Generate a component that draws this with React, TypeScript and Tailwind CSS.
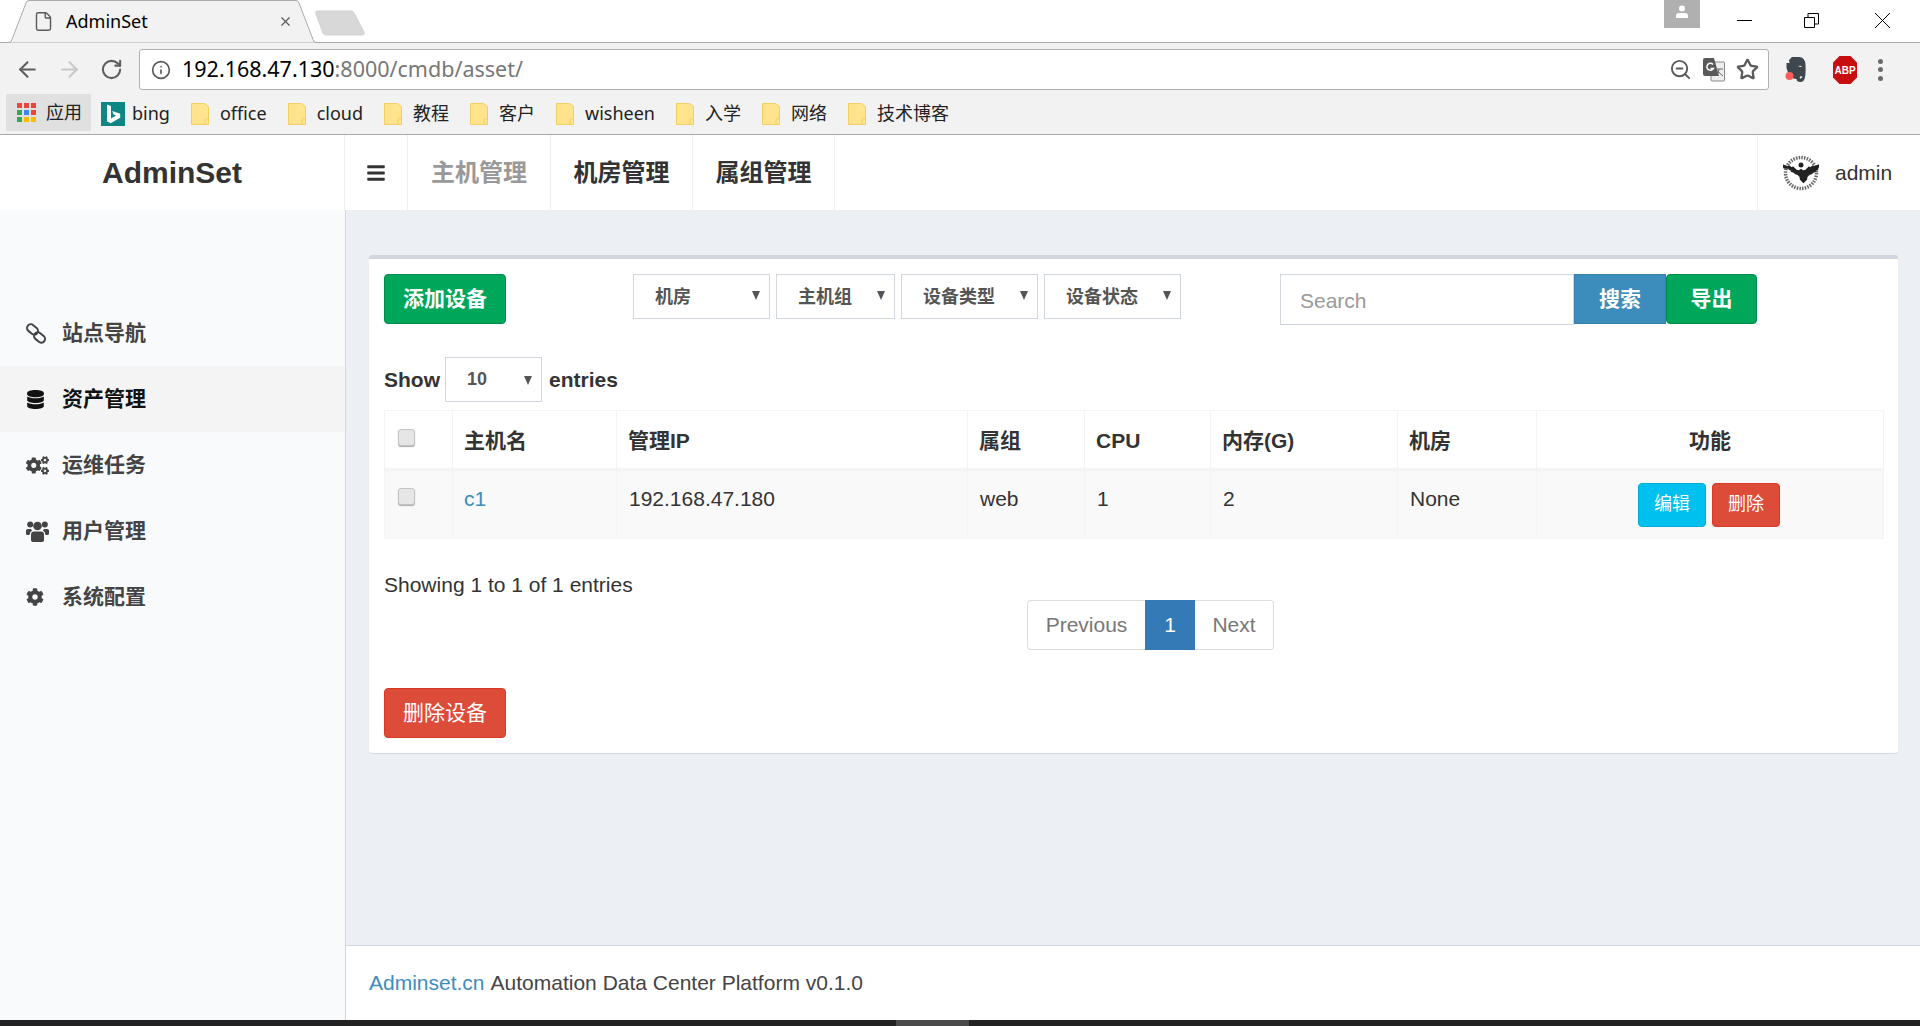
import { ArrowLeft, ArrowRight, File, Info, RotateCw, Star, X, ZoomOut } from "lucide-react";
import { FaBars, FaCog, FaCogs, FaDatabase } from "react-icons/fa";

const sans = "font-['Liberation_Sans','Noto_Sans_CJK_SC',sans-serif]";
const chromeFont = "font-['Noto_Sans','Noto_Sans_CJK_SC',sans-serif]";

const bookmarks = ["office", "cloud", "教程", "客户", "wisheen", "入学", "网络", "技术博客"];

const ChainIcon = () => (
  <svg width="20" height="21" viewBox="0 0 20 21" fill="none" stroke="currentColor" strokeWidth="2">
    <rect x="0.500" y="2.700" width="12" height="7.500" rx="3.750" transform="rotate(40 6.500 6.500)" />
    <rect x="7.500" y="10.700" width="12" height="7.500" rx="3.750" transform="rotate(40 13.500 14.500)" />
  </svg>
);

const UsersIcon = () => (
  <svg width="23" height="21" viewBox="0 0 23 21" fill="currentColor">
    <circle cx="4.200" cy="3.500" r="3" />
    <circle cx="18.800" cy="3.500" r="3" />
    <circle cx="11.500" cy="5" r="4.300" />
    <path d="M0 9.500Q0 8 2 8h3l1 1.500Q3.500 11 3.500 14H1.500Q0 14 0 12.500z" />
    <path d="M23 9.500Q23 8 21 8h-3l-1 1.500q2.500 1.500 2.500 4.500h2Q23 14 23 12.500z" />
    <path d="M5 13.500Q5 10.500 8 10.500h7q3 0 3 3V19q0 2-3 2H8q-3 0-3-2z" />
  </svg>
);

const sideItems = [
  { label: "站点导航", icon: <ChainIcon /> },
  { label: "资产管理", icon: <FaDatabase size={19} />, active: true },
  { label: "运维任务", icon: <FaCogs size={23} /> },
  { label: "用户管理", icon: <UsersIcon /> },
  { label: "系统配置", icon: <FaCog size={18} /> },
];

const filters = [
  { label: "机房", width: "w-[137px]" },
  { label: "主机组", width: "w-[119px]" },
  { label: "设备类型", width: "w-[137px]" },
  { label: "设备状态", width: "w-[137px]" },
];

const columns = ["主机名", "管理IP", "属组", "CPU", "内存(G)", "机房"];
const row = ["192.168.47.180", "web", "1", "2", "None"];

const Folder = () => (
  <svg width="18" height="22" viewBox="0 0 18 22" className="shrink-0">
    <path d="M.5.5h13l4 3v18H.5z" fill="#ffe38d" stroke="#f2cf63" />
    <path d="M14 21.5v-5q1.700-2 3.500 0v5z" fill="#ffe38d" stroke="#f2cf63" />
  </svg>
);

const Triangle = ({ className }: { className: string }) => (
  <span
    className={`pointer-events-none absolute h-0 w-0 border-x-[4px] border-t-[9px] border-x-transparent border-t-[#555] ${className}`}
  />
);

const Checkbox = () => (
  <input
    type="checkbox"
    className="block h-[17px] w-[17px] appearance-none rounded-[3px] border border-[#c4c4c4] bg-[#e6e6e6] shadow-[0_1px_1px_#aaa]"
  />
);

const ChromeBar = () => (
  <div className={`${chromeFont} shrink-0`}>
    <div className="flex h-[43px] border-b border-[#aaaaaa] bg-white">
      <div className="relative ml-[7px] flex h-[43px] w-[313px] items-center pl-[26px] pr-[27px]">
        <svg className="absolute left-0 top-0" width="313" height="43" viewBox="0 0 313 43">
          <path d="M0 42.500h2q2 0 3-3L19 3q1-2.500 3-2.500h267q2 0 3 2.500l14 36.500q1 3 3 3h4" fill="#f2f2f2" stroke="#aaaaaa" />
        </svg>
        <File size={21} strokeWidth={1.6} className="relative text-[#5a5a5a]" />
        <span className="relative ml-[12px] text-[18px] text-black">AdminSet</span>
        <X size={15} strokeWidth={1.8} className="relative ml-auto text-[#555]" />
      </div>
      <svg className="-ml-[5px] mt-[10px]" width="52" height="26" viewBox="0 0 52 26">
        <path d="M2 1h34q2 0 3 2l10 19q1 3-2 3H11q-2 0-3-2L1 4q-1-3 1-3z" fill="#d8d8d8" stroke="#d0d0d0" />
      </svg>
      <div className="ml-auto flex">
        <div className="flex h-[28px] w-[36px] items-start justify-center bg-[#b0b0b0] pt-[5px]">
          <svg width="14" height="13" viewBox="0 0 14 13" fill="#fff">
            <circle cx="7" cy="3.500" r="3" />
            <path d="M1 13V10.500Q1 8.500 4 8h6q3 .5 3 2.500V13z" />
          </svg>
        </div>
        <div className="flex w-[220px] items-start">
          <div className="ml-[37px] mt-[20px] h-px w-[15px] bg-black" />
          <svg className="ml-[52px] mt-[13px]" width="15" height="15" viewBox="0 0 15 15" fill="none" stroke="#000">
            <path d="M.5 4.500h10v10H.5zM4 4.500V.5h10.500V11h-4" />
          </svg>
          <svg className="ml-[56px] mt-[13px]" width="15" height="15" viewBox="0 0 15 15" fill="none" stroke="#000">
            <path d="M0 0l15 15M15 0L0 15" />
          </svg>
        </div>
      </div>
    </div>
    <div className="h-[92px] border-b border-[#aaaaaa] bg-[#f2f2f2]">
      <div className="flex h-[53px] items-center">
        <ArrowLeft size={25} strokeWidth={2} className="ml-[15px] text-[#5f5f5f]" />
        <ArrowRight size={25} strokeWidth={2} className="ml-[17px] text-[#c8c8c8]" />
        <RotateCw size={23} strokeWidth={2.2} className="ml-[18px] text-[#5f5f5f]" />
        <div className="ml-[16px] flex h-[41px] w-[1630px] items-center rounded-[3px] border border-[#b0b0b0] bg-white">
          <Info size={20} strokeWidth={2} className="ml-[11px] text-[#5a5a5a]" />
          <span className="ml-[11px] text-[21.500px]">
            <span className="text-black">192.168.47.130</span>
            <span className="text-[#777]">:8000/cmdb/asset/</span>
          </span>
          <div className="ml-auto flex items-center gap-[11px] pr-[9px]">
            <ZoomOut size={23} strokeWidth={2} className="text-[#5a5a5a]" />
            <svg width="22" height="24" viewBox="0 0 22 24">
              <rect x="8" y="4" width="13.500" height="19" rx="1" fill="#eee" stroke="#888" />
              <path d="M2 0h9l5 18H2q-2 0-2-2V2q0-2 2-2z" fill="#5a5a5a" />
              <path d="M10 6.500a3.500 3.500 0 1 0 .5 4H7.500" fill="none" stroke="#fff" strokeWidth="1.500" />
              <path d="M13 11h7M16 11q0 4-3 7M15 13q2 3 5 5" fill="none" stroke="#666" />
            </svg>
            <Star size={23} strokeWidth={2.4} className="text-[#5a5a5a]" />
          </div>
        </div>
        <svg className="ml-[16px]" width="21" height="26" viewBox="0 0 21 26">
          <path d="M4 3l3-3h7q6 0 6.500 8 .5 10-1 14-1 3-4 3-4 0-4-3-4 0-6-3-3-3-4-8V6h3z" fill="#3d474d" />
          <path d="M13 9q3-1 4 1-2 0-4-1zM15 22q-1-2 1-3 1 1 2 1-2 .5-3 2z" fill="#fff" />
          <circle cx="4.500" cy="19" r="4" fill="#ff5c60" />
        </svg>
        <svg className="ml-[26px]" width="26" height="30" viewBox="0 0 26 30">
          <path d="M7.500 1h11L25 7.500v15L18.500 29h-11L1 22.500v-15z" fill="#c70d0d" />
          <text x="13" y="19" textAnchor="middle" fontSize="10" fontWeight="700" fill="#fff" fontFamily="Liberation Sans">
            ABP
          </text>
        </svg>
        <div className="ml-[20px] flex flex-col gap-[3.500px]">
          <span className="h-[5px] w-[5px] rounded-full bg-[#6a6a6a]" />
          <span className="h-[5px] w-[5px] rounded-full bg-[#6a6a6a]" />
          <span className="h-[5px] w-[5px] rounded-full bg-[#6a6a6a]" />
        </div>
      </div>
      <div className="flex h-[38px] items-start pl-[6px] text-[18px] text-[#222]">
        <div className="-mt-[2px] flex h-[37px] w-[85px] items-center bg-[#e0e0e0] pl-[11px]">
          <svg width="20" height="20" viewBox="0 0 20 20" className="shrink-0">
            <path d="M0 0h5v5H0zM7 0h5v5H7zM14 0h5v5h-5z" fill="#e8453c" />
            <path d="M0 7h5v5H0z" fill="#34a853" />
            <path d="M7 7h5v5H7z" fill="#4285f4" />
            <path d="M14 7h5v5h-5z" fill="#e8453c" />
            <path d="M0 14h5v5H0z" fill="#34a853" />
            <path d="M7 14h5v5H7zM14 14h5v5h-5z" fill="#fbbc05" />
          </svg>
          <span className="ml-[9px]">应用</span>
        </div>
        <div className="flex h-[35px] items-center gap-[21px]">
          <div className="ml-[10px] flex items-center gap-[7px]">
            <svg width="24" height="24" viewBox="0 0 24 24">
              <rect width="24" height="24" fill="#0e8784" />
              <path d="M6 2.500l4 1.500v12.500l5-3-2.500-1.200-1.300-3.300 8 2.800v4l-9.500 5.500-3.700-2z" fill="#fff" />
            </svg>
            <span>bing</span>
          </div>
          {bookmarks.map((name) => (
            <div key={name} className="flex items-center gap-[11px]">
              <Folder />
              <span>{name}</span>
            </div>
          ))}
        </div>
      </div>
    </div>
  </div>
);

const TopNav = () => (
  <header className="flex h-[75px] shrink-0 bg-white text-[#333] shadow-[0_1px_2px_rgba(0,0,0,0.06)]">
    <div className="flex w-[345px] items-center justify-center border-r border-[#eeeeee] text-[30px] font-bold">
      AdminSet
    </div>
    <div className="flex w-[63px] items-center justify-center border-r border-[#eeeeee]">
      <FaBars size={20} />
    </div>
    <div className="flex w-[143px] items-center justify-center border-r border-[#eeeeee] text-[24px] font-bold text-[#999]">
      主机管理
    </div>
    <div className="flex w-[142px] items-center justify-center border-r border-[#eeeeee] text-[24px] font-bold">
      机房管理
    </div>
    <div className="flex w-[142px] items-center justify-center border-r border-[#eeeeee] text-[24px] font-bold">
      属组管理
    </div>
    <div className="ml-auto flex w-[163px] items-center border-l border-[#eeeeee] pl-[25px] text-[21px]">
      <svg width="36" height="38" viewBox="0 0 36 38">
        <circle cx="18" cy="19" r="15.500" fill="none" stroke="#666" strokeWidth="3.500" strokeDasharray="1.500 1.200" />
        <path
          d="M0 11l5 2 1-1 3 2 1-1 3 3 3 1 2-1.500 2 1.500 3-1 3-3 1 1 3-2 1 1 5-2-1 3-1.500.5 1 1-2.500 1 .5 1-3 1-.5 1-3 1-2 2-.5 3-3 3-3-3-.5-3-2-2-3-1-.5-1-3-1 .5-1-2.500-1 1-1L1 14z"
          fill="#222"
          stroke="#222"
          strokeWidth="1.200"
        />
        <circle cx="18" cy="11" r="2.500" fill="#222" />
      </svg>
      <span className="ml-[16px]">admin</span>
    </div>
  </header>
);

const Sidebar = () => (
  <aside className="w-[346px] shrink-0 border-r border-[#d2d6de] bg-[#f9fafc] pt-[90px]">
    {sideItems.map((item) => (
      <div
        key={item.label}
        className={`flex h-[66px] items-center text-[21px] font-bold ${item.active ? "bg-[#f4f4f5] text-[#111]" : "text-[#444]"}`}
      >
        <span className="flex w-[62px] shrink-0 pl-[26px]">{item.icon}</span>
        {item.label}
      </div>
    ))}
  </aside>
);

const Toolbar = () => (
  <div className="flex items-start">
    <button className="h-[50px] w-[122px] rounded-[4px] border border-[#008d4c] bg-[#00a65a] text-[21px] font-bold text-white">
      添加设备
    </button>
    <div className="ml-[127px] flex gap-[6px]">
      {filters.map((f) => (
        <div key={f.label} className={`relative ${f.width}`}>
          <select className="h-[45px] w-full appearance-none border border-[#d2d6de] bg-white pl-[21px] pt-[2px] text-[18px] font-bold text-[#555]">
            <option>{f.label}</option>
          </select>
          <Triangle className="right-[10px] top-[17px]" />
        </div>
      ))}
    </div>
    <input
      placeholder="Search"
      className="ml-[99px] h-[51px] w-[294px] border border-[#d2d6de] bg-white pl-[19px] pt-[2px] text-[21px] placeholder:text-[#999]"
    />
    <button className="h-[50px] w-[92px] border border-[#367fa9] bg-[#3c8dbc] text-[21px] font-bold text-white">
      搜索
    </button>
    <button className="h-[50px] w-[91px] rounded-[4px] border border-[#008d4c] bg-[#00a65a] text-[21px] font-bold text-white">
      导出
    </button>
  </div>
);

const AssetTable = () => (
  <table className="mt-[8px] w-[1499px] table-fixed border-collapse text-[21px] text-[#333]">
    <colgroup>
      <col className="w-[68px]" />
      <col className="w-[164px]" />
      <col className="w-[351px]" />
      <col className="w-[117px]" />
      <col className="w-[126px]" />
      <col className="w-[187px]" />
      <col className="w-[139px]" />
      <col className="w-[347px]" />
    </colgroup>
    <thead>
      <tr className="h-[59px]">
        <th className="border border-b-[3px] border-[#f4f4f4] pb-[5px] pl-[13px]">
          <Checkbox />
        </th>
        {columns.map((c) => (
          <th key={c} className="border border-b-[3px] border-[#f4f4f4] pl-[11px] pt-[2px] text-left font-bold">
            {c}
          </th>
        ))}
        <th className="border border-b-[3px] border-[#f4f4f4] pt-[2px] text-center font-bold">功能</th>
      </tr>
    </thead>
    <tbody>
      <tr className="h-[67px] bg-[#f9f9f9]">
        <td className="border border-[#f4f4f4] pb-[25px] pl-[13px] pt-[9px]">
          <Checkbox />
        </td>
        <td className="border border-[#f4f4f4] pb-[26px] pl-[11px] pt-[15px] leading-[26px] text-[#3c8dbc]">c1</td>
        {row.map((v) => (
          <td key={v} className="border border-[#f4f4f4] pb-[26px] pl-[12px] pt-[15px] leading-[26px]">
            {v}
          </td>
        ))}
        <td className="border border-[#f4f4f4]">
          <div className="flex justify-center gap-[6px] pr-[2px]">
            <button className="h-[44px] w-[68px] rounded-[4px] border border-[#00acd6] bg-[#00c0ef] text-[18px] text-white">
              编辑
            </button>
            <button className="h-[44px] w-[68px] rounded-[4px] border border-[#d73925] bg-[#dd4b39] text-[18px] text-white">
              删除
            </button>
          </div>
        </td>
      </tr>
    </tbody>
  </table>
);

export default function App() {
  return (
    <div className={`${sans} flex h-[1026px] w-[1920px] flex-col overflow-hidden bg-white`}>
      <ChromeBar />
      <TopNav />
      <div className="flex min-h-0 flex-1">
        <Sidebar />
        <div className="flex min-w-0 flex-1 flex-col">
          <main className="flex-1 bg-[#ecf0f5] pl-[23px] pr-[22px] pt-[45px]">
            <div className="rounded-[3px] border-t-4 border-[#d2d6de] bg-white px-[15px] pb-[15px] pt-[15px] shadow-[0_1px_1px_rgba(0,0,0,0.1)]">
              <Toolbar />
              <div className="mt-[32px] flex items-center text-[21px] font-bold text-[#333]">
                Show
                <div className="relative ml-[5px] mr-[7px] w-[97px]">
                  <select className="h-[45px] w-full appearance-none border border-[#d2d6de] bg-white pl-[21px] text-[18px] font-bold text-[#555]">
                    <option>10</option>
                  </select>
                  <Triangle className="right-[10px] top-[19px]" />
                </div>
                entries
              </div>
              <AssetTable />
              <div className="mt-[33px] text-[21px] leading-[26px] text-[#333]">Showing 1 to 1 of 1 entries</div>
              <div className="ml-[643px] mt-[2px] flex h-[50px] w-fit text-[21px]">
                <span className="flex w-[118px] items-center justify-center rounded-l-[4px] border border-r-0 border-[#ddd] text-[#777]">
                  Previous
                </span>
                <span className="flex w-[50px] items-center justify-center bg-[#337ab7] text-white">1</span>
                <span className="flex w-[79px] items-center justify-center rounded-r-[4px] border border-l-0 border-[#ddd] text-[#777]">
                  Next
                </span>
              </div>
              <button className="mt-[38px] block h-[50px] w-[122px] rounded-[4px] border border-[#d73925] bg-[#dd4b39] text-[21px] text-white">
                删除设备
              </button>
            </div>
          </main>
          <footer className="flex h-[75px] shrink-0 items-center border-t border-[#d2d6de] bg-white pl-[23px] text-[21px] text-[#444]">
            <span className="text-[#3c8dbc]">Adminset.cn</span>
            <span className="ml-[6px]">Automation Data Center Platform v0.1.0</span>
          </footer>
        </div>
      </div>
      <div className="h-[6px] shrink-0 bg-[#222222]">
        <div className="ml-[896px] h-full w-[73px] bg-[#4a4a4a]" />
      </div>
    </div>
  );
}
